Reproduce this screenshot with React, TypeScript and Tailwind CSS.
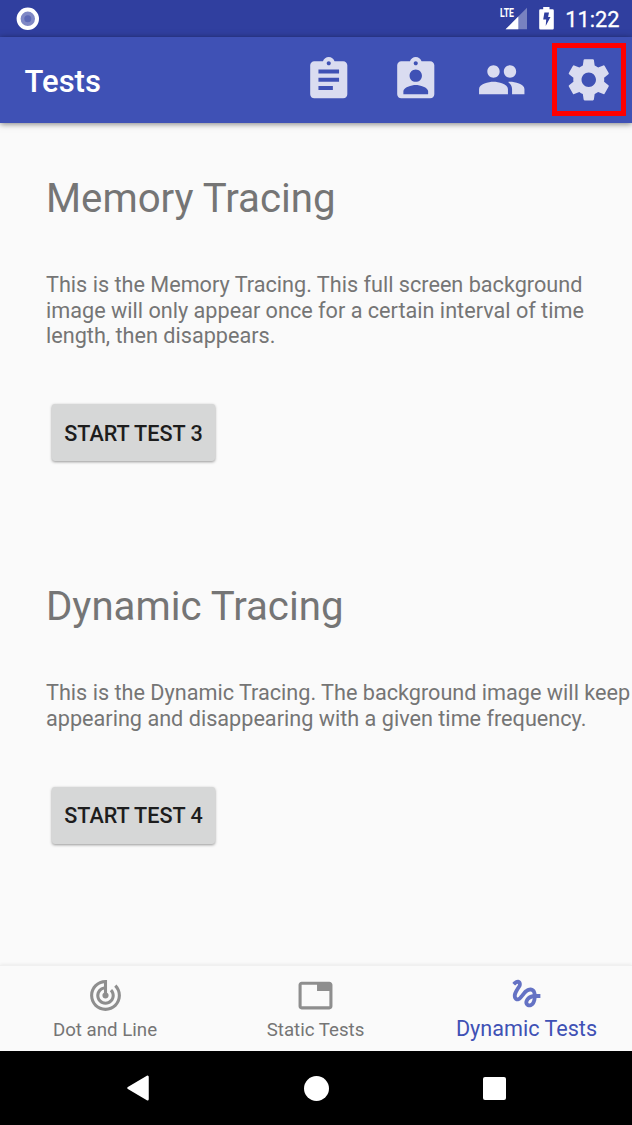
import type { ReactNode } from "react";
import { MdGesture, MdPeople, MdTab, MdTrackChanges } from "react-icons/md";

const ICON_PATHS = {
  assignment:
    "M19 3h-4.18C14.4 1.84 13.3 1 12 1c-1.3 0-2.4.84-2.82 2H5c-1.1 0-2 .9-2 2v14c0 1.1.9 2 2 2h14c1.1 0 2-.9 2-2V5c0-1.1-.9-2-2-2zm-7 0c.55 0 1 .45 1 1s-.45 1-1 1-1-.45-1-1 .45-1 1-1zm2 14H7v-2h7v2zm3-4H7v-2h10v2zm0-4H7V7h10v2z",
  assignmentInd:
    "M19 3h-4.18C14.4 1.84 13.3 1 12 1c-1.3 0-2.4.84-2.82 2H5c-1.1 0-2 .9-2 2v14c0 1.1.9 2 2 2h14c1.1 0 2-.9 2-2V5c0-1.1-.9-2-2-2zm-7 0c.55 0 1 .45 1 1s-.45 1-1 1-1-.45-1-1 .45-1 1-1zm0 4c1.66 0 3 1.34 3 3s-1.34 3-3 3-3-1.34-3-3 1.34-3 3-3zm6 12H6v-1.4c0-2 4-3.1 6-3.1s6 1.1 6 3.1V19z",
  settings:
    "M19.43 12.98c.04-.32.07-.64.07-.98s-.03-.66-.07-.98l2.11-1.65c.19-.15.24-.42.12-.64l-2-3.46c-.12-.22-.39-.3-.61-.22l-2.49 1c-.52-.4-1.08-.73-1.69-.98l-.38-2.65C14.46 2.18 14.25 2 14 2h-4c-.25 0-.46.18-.49.42l-.38 2.65c-.61.25-1.17.59-1.69.98l-2.49-1c-.23-.09-.49 0-.61.22l-2 3.46c-.13.22-.07.49.12.64l2.11 1.65c-.04.32-.07.65-.07.98s.03.66.07.98l-2.11 1.65c-.19.15-.24.42-.12.64l2 3.46c.12.22.39.3.61.22l2.49-1c.52.4 1.08.73 1.69.98l.38 2.65c.03.24.24.42.49.42h4c.25 0 .46-.18.49-.42l.38-2.65c.61-.25 1.17-.59 1.69-.98l2.49 1c.23.09.49 0 .61-.22l2-3.46c.12-.22.07-.49-.12-.64l-2.11-1.65zM12 15.5c-1.93 0-3.5-1.57-3.5-3.5s1.57-3.5 3.5-3.5 3.5 1.57 3.5 3.5-1.57 3.5-3.5 3.5z",
};

function BarIcon({ name }: { name: keyof typeof ICON_PATHS }) {
  return (
    <svg className="h-[49.5px] w-[49.5px]" viewBox="0 0 24 24" fill="currentColor">
      <path d={ICON_PATHS[name]} />
    </svg>
  );
}

function StatusBar() {
  return (
    <div className="flex h-[37px] shrink-0 items-center bg-[#303f9f] pl-4 pr-[12.6px] text-white">
      <svg className="h-6 w-6" viewBox="0 0 24 24">
        <circle cx="11.8" cy="11.8" r="9.2" fill="#7f88c5" stroke="#fff" strokeWidth="4" />
        <circle cx="11.8" cy="11.8" r="3.5" fill="#5d69b6" />
      </svg>
      <div className="ml-auto flex items-center">
        <svg className="h-[37px] w-[30px]" viewBox="498 0 30 37">
          <path d="M526 7.8V29.3H504.5z" fill="#fff" fillOpacity=".35" />
          <path d="M498 5h16v12h-3.5l-3 3H498z" fill="#303f9f" />
          <path d="M517.3 16.6V29.3H504.6z" fill="#fff" />
          <text
            x="499"
            y="17.2"
            fill="#fff"
            fontSize="12.6"
            fontWeight="700"
            textLength="14"
            lengthAdjust="spacingAndGlyphs"
            className="font-['Roboto',sans-serif]"
          >
            LTE
          </text>
        </svg>
        <svg className="ml-[10.6px] h-[37px] w-4" viewBox="539 0 16 37">
          <path
            d="M543.2 7h6.3v2.3h3.1q1.2 0 1.2 1.2v17.8q0 1.2-1.2 1.2h-12.2q-1.2 0-1.2-1.2V10.5q0-1.2 1.2-1.2h2.8z"
            fill="#fff"
          />
          <path d="M544.4 12.5h4.6l-.9 4.5h2.4l-4.8 9 .5-6.5h-3z" fill="#303f9f" />
        </svg>
        <span className="ml-[10px] pt-[2px] text-[21.8px] leading-[35px] [-webkit-text-stroke:0.3px_white]">11:22</span>
      </div>
    </div>
  );
}

function AppBar() {
  return (
    <header className="relative z-10 flex h-[86px] shrink-0 items-center bg-[#3f51b5] pl-[24.6px] pr-[18.6px] shadow-[0_1px_6px_rgba(0,0,0,0.5)]">
      <h1 className="pt-[3px] text-[31px] font-medium leading-9 text-white">Tests</h1>
      <div className="ml-auto flex gap-[37px] text-[#dadcf0]">
        <BarIcon name="assignment" />
        <BarIcon name="assignmentInd" />
        <MdPeople size={49.5} />
        <div className="relative">
          <BarIcon name="settings" />
          <div className="absolute -left-3 -top-3 h-[73px] w-[74px] border-[5px] border-[#ff0000]" />
        </div>
      </div>
    </header>
  );
}

function TestSection({ title, children, action }: { title: string; children: ReactNode; action: string }) {
  return (
    <section className="pl-[46px]">
      <h2 className="text-[40.2px] leading-[48px] text-[#757575]">{title}</h2>
      <p className="mt-[49.4px] whitespace-nowrap text-[21.65px] leading-[25.3px] text-[#757575]">{children}</p>
      <button className="ml-[6px] mt-[56px] flex h-[57px] w-[163px] items-center justify-center whitespace-nowrap rounded-[3px] bg-[#d6d7d7] pt-[2px] text-[21.6px] font-medium text-[#1d1d1d] shadow-[0_1px_3px_rgba(0,0,0,0.4)]">
        {action}
      </button>
    </section>
  );
}

function BottomNav() {
  return (
    <nav className="flex h-[86px] shrink-0 border-t border-[#f0f0f0] bg-[#fafafa] shadow-[0_-1px_3px_rgba(0,0,0,0.06)]">
      <div className="flex w-[210px] flex-col items-center pt-[11px] text-[18.7px] leading-6 text-[#757575]">
        <MdTrackChanges size={37} className="text-[#8e8e8e]" />
        <span className="mt-1">Dot and Line</span>
      </div>
      <div className="flex w-[211px] flex-col items-center pt-[11px] text-[18.7px] leading-6 text-[#757575]">
        <MdTab size={37} className="text-[#8e8e8e]" />
        <span className="mt-1">Static Tests</span>
      </div>
      <div className="flex w-[211px] flex-col items-center pt-[9px] text-[21.6px] leading-6 text-[#3f51b5]">
        <MdGesture size={37} className="text-[#6472c4]" />
        <span className="mt-[5px]">Dynamic Tests</span>
      </div>
    </nav>
  );
}

function SystemNav() {
  return (
    <div className="flex h-[74px] shrink-0 items-center justify-between bg-black px-[126.4px]">
      <svg className="h-[26px] w-6" viewBox="0 0 24 26">
        <path d="M2.5 13L21.5 1.8V24.2z" fill="#fff" stroke="#fff" strokeWidth="2.5" strokeLinejoin="round" />
      </svg>
      <div className="h-[25px] w-[25px] rounded-full bg-white" />
      <div className="h-[23px] w-[23px] rounded-[2px] bg-white" />
    </div>
  );
}

export default function App() {
  return (
    <div className="flex h-[1125px] w-[632px] flex-col overflow-hidden bg-[#fafafa] font-['Roboto',sans-serif]">
      <StatusBar />
      <AppBar />
      <main className="flex flex-1 flex-col gap-[121.7px] pt-[52px]">
        <TestSection title="Memory Tracing" action="START TEST 3">
          This is the Memory Tracing. This full screen background
          <br />
          image will only appear once for a certain interval of time
          <br />
          length, then disappears.
        </TestSection>
        <TestSection title="Dynamic Tracing" action="START TEST 4">
          This is the Dynamic Tracing. The background image will keep
          <br />
          appearing and disappearing with a given time frequency.
        </TestSection>
      </main>
      <BottomNav />
      <SystemNav />
    </div>
  );
}
